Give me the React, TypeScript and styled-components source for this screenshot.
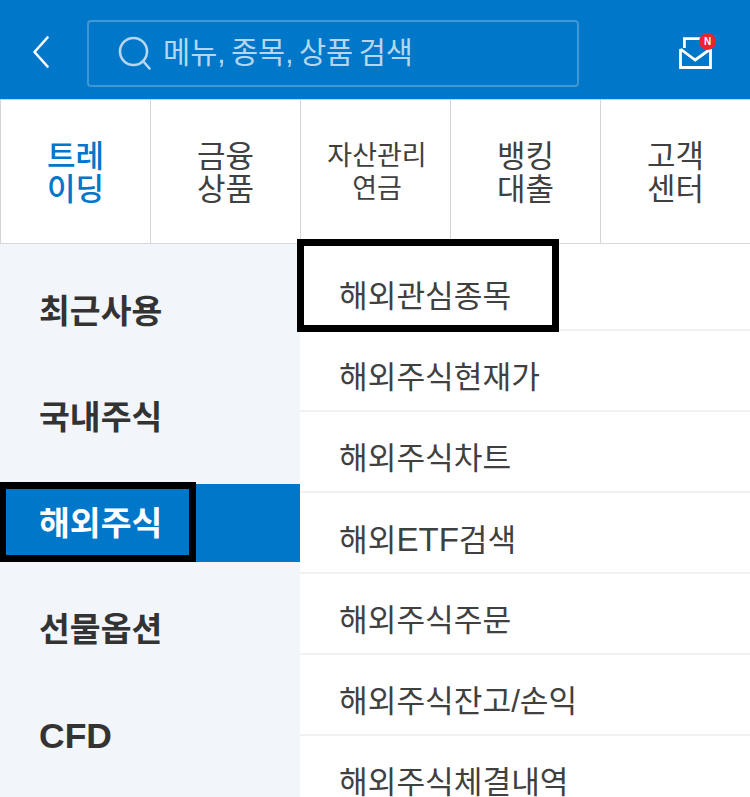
import styled, { createGlobalStyle } from "styled-components";

const tabs = [
  { label: ["트레", "이딩"], active: true },
  { label: ["금융", "상품"] },
  { label: ["자산관리", "연금"], small: true },
  { label: ["뱅킹", "대출"] },
  { label: ["고객", "센터"] },
];

const sideItems = ["최근사용", "국내주식", "해외주식", "선물옵션", "CFD"];

const subItems = [
  "해외관심종목",
  "해외주식현재가",
  "해외주식차트",
  "해외ETF검색",
  "해외주식주문",
  "해외주식잔고/손익",
  "해외주식체결내역",
];

const GlobalStyle = createGlobalStyle`
  html, body {
    margin: 0;
    padding: 0;
    height: 100%;
    overflow: hidden;
    background: #fff;
  }
  body {
    font-family: "Liberation Sans", "Noto Sans CJK KR", sans-serif;
  }
`;

const Page = styled.div`
  position: relative;
  width: 750px;
  height: 797px;
  overflow: hidden;
`;

const Header = styled.header`
  display: flex;
  align-items: center;
  height: 99px;
  padding: 0 37px 0 32px;
  box-sizing: border-box;
  background: #0077c8;
`;

const BackButton = styled.div`
  display: flex;
  width: 20px;
  margin-top: 5px;
  margin-right: 35px;
`;

const SearchBox = styled.div`
  display: flex;
  align-items: center;
  gap: 11px;
  width: 492px;
  height: 67px;
  margin-top: 7px;
  padding-left: 29px;
  box-sizing: border-box;
  border: 2px solid #3f97d6;
  border-radius: 4px;
  color: #b5d6ee;
  font-size: 29.5px;
  line-height: 40px;
  word-spacing: -2.7px;
`;

const MailButton = styled.div`
  position: relative;
  display: flex;
  margin-left: auto;
  width: 34px;
  height: 34px;
  margin-top: 7px;
`;

const Badge = styled.span`
  position: absolute;
  top: -3px;
  right: -3px;
  width: 17px;
  height: 17px;
  border-radius: 50%;
  background: #f3212e;
  color: #fff;
  font-size: 10px;
  font-weight: 700;
  line-height: 17px;
  text-align: center;
`;

const TabBar = styled.nav`
  display: flex;
  height: 145px;
  box-sizing: border-box;
  border-top: 1px solid #cfd3d6;
  border-bottom: 1px solid #d6d9dc;
`;

const Tab = styled.div<{ $active?: boolean; $small?: boolean }>`
  display: flex;
  flex-direction: column;
  align-items: center;
  justify-content: center;
  width: 150px;
  padding-top: 2px;
  padding-left: ${(p) => (p.$small ? "3px" : "0")};
  box-sizing: border-box;
  border-left: 1px solid #d3d6d9;
  color: ${(p) => (p.$active ? "#0077c8" : "#404040")};
  font-size: ${(p) => (p.$small ? "27px" : "31px")};
  font-weight: ${(p) => (p.$active ? 500 : 400)};
  line-height: 33px;
`;

const Body = styled.div`
  display: flex;
  height: 553px;
`;

const Sidebar = styled.ul`
  display: flex;
  flex-direction: column;
  gap: 28px;
  width: 300px;
  margin: 0;
  padding: 28px 0 0;
  box-sizing: border-box;
  list-style: none;
  background: #f2f6fa;
`;

const SideItem = styled.li<{ $active?: boolean }>`
  flex: none;
  height: 78px;
  padding-left: 39px;
  background: ${(p) => (p.$active ? "#0077c8" : "transparent")};
  color: ${(p) => (p.$active ? "#fff" : "#333")};
  font-size: 33.5px;
  font-weight: 700;
  line-height: 80px;
`;

const SubList = styled.ul`
  flex: 1;
  margin: 0;
  padding: 6px 0 0;
  list-style: none;
`;

const SubItem = styled.li`
  height: 81px;
  padding: 9px 0 0 39px;
  box-sizing: border-box;
  border-bottom: 2px solid #f0f1f2;
  color: #404040;
  font-size: 31.2px;
  line-height: 75px;
`;

// latin letters run a little larger than the hangul around them
const Latin = styled.span`
  font-size: 1.06em;
`;

const Highlight = styled.div<{ $l: number; $t: number; $w: number; $h: number }>`
  position: absolute;
  left: ${(p) => p.$l}px;
  top: ${(p) => p.$t}px;
  width: ${(p) => p.$w}px;
  height: ${(p) => p.$h}px;
  box-sizing: border-box;
  border: 7px solid #000;
  pointer-events: none;
`;

const withLatin = (text: string) =>
  text.split(/([A-Z]+)/).map((part, i) => (i % 2 ? <Latin key={part}>{part}</Latin> : part));

export default function App() {
  return (
    <Page>
      <GlobalStyle />
      <Header>
        <BackButton>
          <svg width="18" height="32" viewBox="0 0 18 32" fill="none">
            <path d="M15.5 1.5 2.5 16l13 14.5" stroke="#fff" strokeWidth="2.6" strokeLinecap="round" strokeLinejoin="round" />
          </svg>
        </BackButton>
        <SearchBox>
          <svg width="34" height="34" viewBox="0 0 34 34" fill="none">
            <circle cx="15.5" cy="15.5" r="13.5" stroke="#b5d6ee" strokeWidth="2.6" />
            <path d="m25 25 6.5 7.5" stroke="#b5d6ee" strokeWidth="2.6" strokeLinecap="round" />
          </svg>
          <span>메뉴, 종목, 상품 검색</span>
        </SearchBox>
        <MailButton>
          <svg width="34" height="34" viewBox="0 0 34 34" fill="none">
            <path d="M5.4 12V2.7H28V12" stroke="#fff" strokeWidth="2.8" />
            <path d="M1.5 13V31.5H31.5V13" stroke="#fff" strokeWidth="2.8" />
            <path d="M1.5 13 16.2 24 31.5 13" stroke="#fff" strokeWidth="2.8" />
          </svg>
          <Badge>N</Badge>
        </MailButton>
      </Header>
      <TabBar>
        {tabs.map((tab) => (
          <Tab key={tab.label[0]} $active={tab.active} $small={tab.small}>
            {tab.label.map((line) => (
              <span key={line}>{line}</span>
            ))}
          </Tab>
        ))}
      </TabBar>
      <Body>
        <Sidebar>
          {sideItems.map((item) => (
            <SideItem key={item} $active={item === "해외주식"}>
              {withLatin(item)}
            </SideItem>
          ))}
        </Sidebar>
        <SubList>
          {subItems.map((item) => (
            <SubItem key={item}>{withLatin(item)}</SubItem>
          ))}
        </SubList>
      </Body>
      <Highlight $l={297} $t={239} $w={262} $h={93} />
      <Highlight $l={-1} $t={482} $w={197} $h={80} />
    </Page>
  );
}
